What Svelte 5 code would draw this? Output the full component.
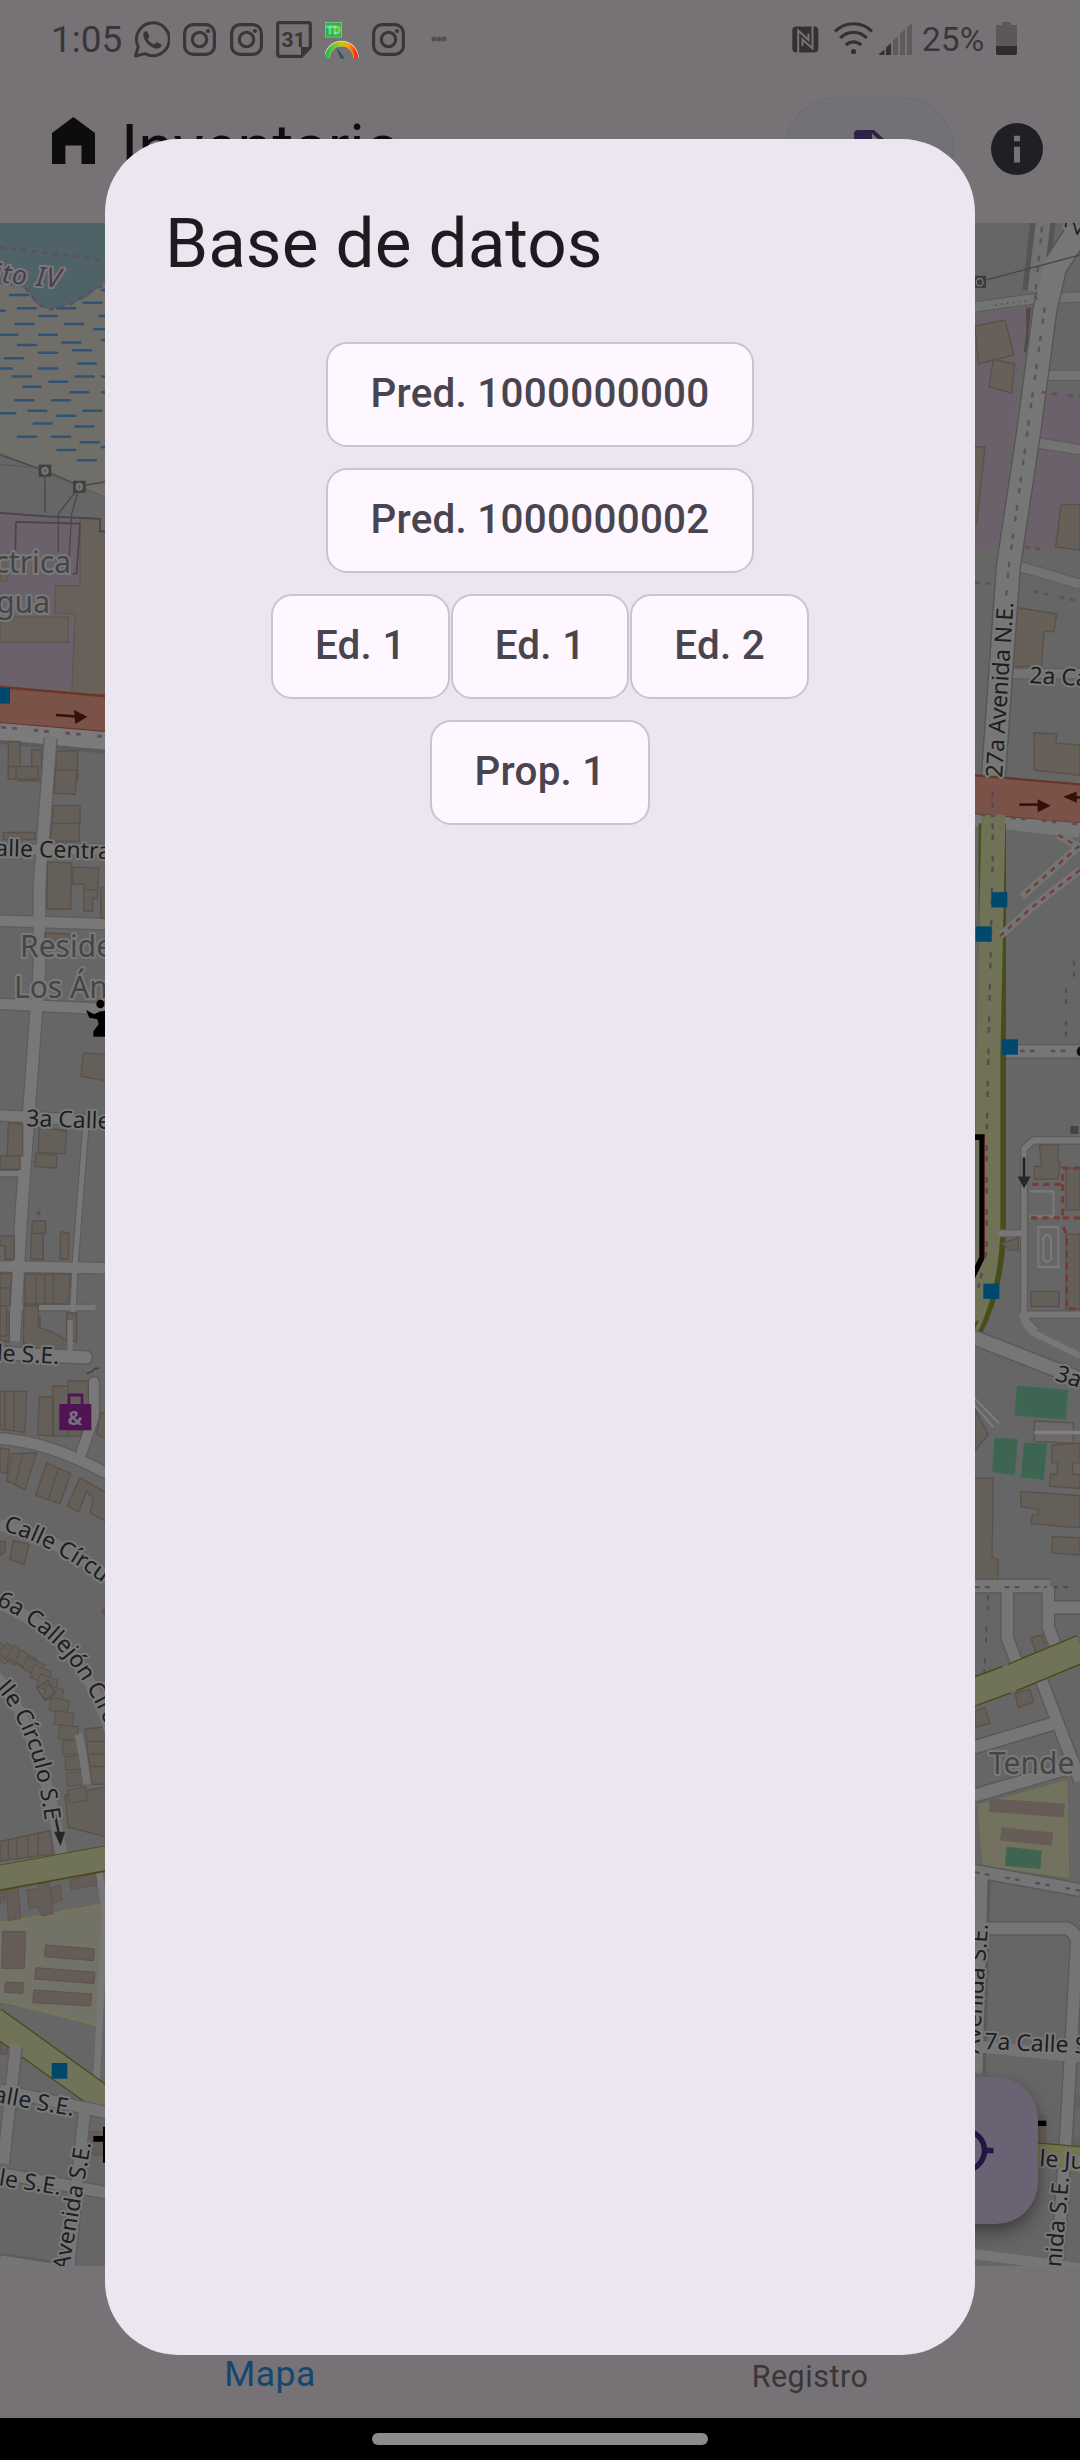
<script>
  const rows = [
    ['Pred. 1000000000'],
    ['Pred. 1000000002'],
    ['Ed. 1', 'Ed. 1', 'Ed. 2'],
    ['Prop. 1'],
  ];

  // wetland hatching: x, y in the north-west tile
  const marsh = [
    [30,210],[54,247],[-40,254],[117,269],[172,247],[250,232],[299,269],[46,291],[195,291],[282,306],[-2,321],[117,321],
    [187,343],[54,350],[219,365],[306,336],[117,372],[14,387],[234,402],[-18,416],[117,416],[38,438],[227,438],[306,438],
    [148,453],[69,467],[211,482],[306,482],[46,505],[156,505],[85,534],[250,534],[-8,541],[172,548],[101,570],[227,578],
    [54,607],[156,607],[242,622],[306,636],[172,644],[234,673],[306,196],
  ];

  // curved row of houses beside the circular street
  const terrace = Array.from({ length: 15 }, (_, i) => {
    const t = i / 14;
    return { x: 5 + 225 * Math.sin(t * 1.5), y: 930 + 430 * (1 - Math.cos(t * 1.5)), a: 40 - t * 50 };
  });
  const bars = [[879, 48.5, 5.5], [886, 42, 5], [893, 35, 5], [900, 28.5, 5], [907, 22, 5]];
</script>

{#snippet insta()}
  <svg class="insta" viewBox="0 0 33 33">
    <rect x="1.6" y="1.6" width="29.8" height="29.8" rx="8.5" fill="none" stroke="#39363a" stroke-width="3.2" />
    <circle cx="16.5" cy="16.5" r="7.2" fill="none" stroke="#39363a" stroke-width="3.1" />
    <circle cx="25" cy="8" r="2.1" fill="#39363a" />
  </svg>
{/snippet}

<div class="screen">
  <div class="status">
    <div class="left">
      <span class="time">1:05</span>
      <svg class="wa" viewBox="0 0 36 38">
        <path d="M1.5 36 4.2 26.5A16.4 16.4 0 1 1 11 33.6Z" fill="none" stroke="#39363a" stroke-width="3" stroke-linejoin="round" />
        <path d="M9.3 14.5c.2-2.6 2-3.6 3.8-3.2l2.3 5.2-1.7 2.4c1.7 3 3.8 4.4 6.6 5.5l2.2-2.3 5 2.5c.2 3.2-3.2 4.6-6 4C15.500 27.200 9.200 20.300 9.300 14.500Z" fill="#39363a" />
      </svg>
      {@render insta()}
      {@render insta()}
      <svg class="cal" viewBox="0 0 36 37">
        <path d="M3.500 1.700H32.500Q34.300 1.700 34.300 3.500V26L25.500 35.300H3.500Q1.700 35.300 1.700 33.500V3.500Q1.700 1.700 3.500 1.700Z" fill="none" stroke="#39363a" stroke-width="3.200" />
        <path d="M25 36V26H35Z" fill="#39363a" />
        <text x="17.500" y="25.500" text-anchor="middle" font-size="21" font-weight="700" fill="#39363a">31</text>
      </svg>
      <svg class="td" viewBox="0 0 34 37">
        <defs>
          <linearGradient id="dial"><stop offset="0" stop-color="#24bd45" /><stop offset=".5" stop-color="#c5c914" /><stop offset=".75" stop-color="#ff9a00" /><stop offset="1" stop-color="#ff2a12" /></linearGradient>
        </defs>
        <rect x=".5" y=".5" width="16" height="14.500" fill="#22b83c" stroke="#78bd83" />
        <text x="8.500" y="12" text-anchor="middle" font-size="11" font-weight="700" fill="#22b83c" stroke="#cfe5d0" stroke-width=".6">TD</text>
        <path d="M2 36A14.500 14.500 0 0 1 31 36" fill="none" stroke="#d8d8c8" stroke-width="5.500" />
        <path d="M2 36.500A14.500 14.500 0 0 1 31 36.500" fill="none" stroke="url(#dial)" stroke-width="4.500" />
        <path d="M11 25 20 36.500H15.500Z" fill="#1c5b55" />
      </svg>
      {@render insta()}
      <svg class="more" viewBox="0 0 16 6"><circle cx="3" cy="3" r="2.500" /><circle cx="8" cy="3" r="2.500" /><circle cx="13" cy="3" r="2.500" /></svg>
    </div>
    <div class="right">
      <svg class="nfc" viewBox="0 0 27 27">
        <rect x=".3" y=".5" width="26" height="26" rx="4" fill="#343135" />
        <path d="M6.200 27V4.500L16.500 14V7.500" fill="none" stroke="#777276" stroke-width="2" />
        <path d="M20.500 0V22.500L10.500 13.500V20" fill="none" stroke="#777276" stroke-width="2" />
      </svg>
      <svg class="wifi" viewBox="0 0 39 34">
        <g fill="none" stroke="#343135" stroke-width="3.200">
          <path d="M1 10.500A26 26 0 0 1 38 10.500M6.200 17A18.500 18.500 0 0 1 32.800 17M11.800 24A11 11 0 0 1 27.200 24" />
        </g>
        <circle cx="19.500" cy="30.500" r="2.600" fill="#343135" />
      </svg>
      <svg class="signal" viewBox="879 21 34 33">
        {#each bars as [x, y, w], i}
          <path d={`M${x} ${y + 4.500}L${x + w} ${y}V54H${x}Z`} fill={i < 2 ? '#343135' : '#5d595d'} />
        {/each}
      </svg>
      <span class="pct">25%</span>
      <svg class="bat" viewBox="0 0 21 33">
        <path d="M6 0H15V3H21V31Q21 33 19 33H2Q0 33 0 31V3H6Z" fill="#5b585c" />
        <path d="M0 24H21V31Q21 33 19 33H2Q0 33 0 31Z" fill="#302d31" />
      </svg>
    </div>
  </div>

  <div class="appbar">
    <svg class="home" viewBox="0 0 43 47"><path d="M0 16 21.400 0 43 16V47H29.500V28.500H13.400V47H0Z" fill="#0d0c0e" /></svg>
    <span class="apptitle">Inventario</span>
    <div class="pill">
      <svg viewBox="0 0 42 52"><path d="M4 0H20L32 11V48H4Q0 48 0 44V4Q0 0 4 0Z" fill="#2c2347" /><path d="M18 3.500V12.500H28Z" fill="#727176" /></svg>
    </div>
    <svg class="info" viewBox="0 0 52 52"><circle cx="26" cy="26" r="26" fill="#202024" /><path d="M23 12.700H29V18.300H23ZM23 23.700H29V39.500H23Z" fill="#777276" /></svg>
  </div>

  <div class="mapbox">
    <svg class="map" viewBox="0 223 1080 2043">
      <defs>
        <path id="c1" d="M3 1531Q50 1543 112 1590" />
        <path id="c2" d="M-4 1605Q22 1616 50 1641Q80 1667 108 1730" />
        <path id="c3" d="M-4 1689Q34 1730 45 1822" />
      </defs>
      <rect x="0" y="223" width="1080" height="2043" fill="#666" />

      <!-- west: wetland, plant and avenue -->
      <g transform="translate(0 220) scale(.33333 .35714)">
        <path d="M0 0H330V790L240 745 0 650Z" fill="#706e69" />
        <path d="M0 0H330V165Q290 190 262 215Q200 245 150 249Q105 245 88 205L75 190 0 180Z" fill="#4f6268" />
        <path d="M0 78 90 86 165 95 235 102 330 115M75 190 118 238 150 250 208 238 270 200 330 175" fill="none" stroke="#5d4f5b" stroke-width="7" stroke-dasharray="15 17" />
        {#each marsh as [x, y]}
          <path d={`M${x} ${y}H${x + 54}`} stroke="#2e5375" stroke-width="7" stroke-linecap="round" />
        {/each}
        <path d="M0 820 240 838V870H320V1330L0 1308Z" fill="#6a616a" />
        <path d="M240 836H300V872H330V1330H215L225 1104 165 1100V1024H240ZM0 1112H205V1182H0ZM0 940H40L20 1010H0Z" fill="#676159" stroke="#5c554d" stroke-width="3" />
        <path d="M0 820 140 830 300 837V872H330M48 845 240 850 230 990H218M48 845 45 960" fill="none" stroke="#4b424a" stroke-width="5" />
        <path d="M0 657 135 702 240 745 330 731M135 702V820M238 747 175 823V930M238 747 215 823 207 950" fill="none" stroke="#494949" stroke-width="4" />
        <path d="M0 685 100 692 330 782" fill="none" stroke="#595959" stroke-width="3" />
        {#each [[135, 702], [238, 747]] as [x, y]}
          <rect x={x - 19} y={y - 17} width="38" height="34" fill="#414141" />
          <circle cx={x} cy={y} r="11" fill="#777" />
          <path d={`M${x - 6} ${y}h12M${x} ${y - 6}v12`} stroke="#555" stroke-width="3" />
        {/each}
        <path d="M0 1435 330 1463" stroke="#5b5b5b" stroke-width="64" />
        <path d="M0 1430 330 1458" stroke="#7b7b7b" stroke-width="52" />
        <path d="M-5 1356 335 1383" stroke="#6b3528" stroke-width="104" />
        <path d="M-5 1358 335 1385" stroke="#7a5247" stroke-width="94" />
        <path d="M5 1420 330 1448" stroke="#5d4f5b" stroke-width="8" stroke-dasharray="14 18 14 50" />
        <path d="M168 1386 230 1390" stroke="#331009" stroke-width="7" />
        <path d="M222 1372 262 1391 226 1411Z" fill="#331009" />
        <rect x="-20" y="1310" width="50" height="44" fill="#00486c" />
        <path d="M25 1460H60V1560H25ZM95 1483H125V1570H55V1540H95ZM168 1487H233V1570H168Z" fill="#655f5a" stroke="#5a514a" stroke-width="4" />
      </g>

      <!-- west: street grid -->
      <g transform="translate(0 770) scale(.33333 .35714)">
        <g fill="none" stroke="#5c5c5c">
          <path d="M152 -90 145 0 118 330V560L65 1230 42 1600" stroke-width="42" />
          <path d="M0 223H330M0 422 330 432M0 655 330 670M0 967 330 985M0 1390 330 1395" stroke-width="36" />
          <path d="M258 990 225 1390 215 1600M0 1130H75M65 1505H280" stroke-width="22" />
        </g>
        <g fill="none" stroke="#787878">
          <path d="M152 -90 145 0 118 330V560L65 1230 42 1600" stroke-width="35" />
          <path d="M0 223H330M0 422 330 432M0 655 330 670M0 967 330 985M0 1390 330 1395" stroke-width="29" />
          <path d="M258 990 225 1390 215 1600M0 1130H75M65 1505H280" stroke-width="15" stroke-linecap="round" />
        </g>
        <path
          d="M25 -10H115V25H25ZM48 -10V20M165 0H230L225 68 163 65ZM160 100H240V150H157ZM157 150H238V200H150ZM10 175H105V195H10ZM142 258 215 260 212 390H142ZM220 272 296 275 292 360H278V395H252V320H218ZM255 335H290M302 330H330V415H302ZM135 455 210 460V480H135ZM250 792 330 797V872L243 858ZM25 990H68V1080H22ZM0 1080H60V1118H0ZM118 1000 200 1010 195 1075 115 1070ZM108 1073 172 1080 168 1115 105 1110ZM97 1263H137V1298H95ZM94 1298H130V1370H92ZM182 1293 207 1297 205 1370H180ZM0 1305H43V1370H15V1332H0ZM0 1410H36L30 1500H0ZM0 1450H33M75 1412H210L205 1495H75ZM108 1412V1495M135 1412V1495M160 1412V1495M75 1520 120 1530V1600H70ZM200 1520H230V1600H200ZM0 1500 28 1520V1600H0Z"
          fill="#655f5a" stroke="#5a514a" stroke-width="4" />
        <circle cx="116" cy="1241" r="6" fill="#456039" />
        <circle cx="301" cy="655" r="12" fill="#000" />
        <path d="M258 672 282 684 300 676 330 672V747H280V732L296 712 292 698 268 694Z" fill="#000" />
      </g>

      <!-- west: circular streets -->
      <g transform="translate(0 1320) scale(.33333 .35714)">
        <path d="M0 -40H20V45H0ZM72 -40H115V20L160 35 205 60V90H150L70 65Z" fill="#655f5a" stroke="#5a514a" stroke-width="4" />
        <path d="M0 92 260 105" stroke="#5c5c5c" stroke-width="42" stroke-linecap="round" />
        <path d="M0 92 258 105" stroke="#787878" stroke-width="34" stroke-linecap="round" />
        <path d="M210 0V90" stroke="#777" stroke-width="16" />
        <g fill="none"><path d="M0 332Q150 340 330 435M282 175V270L245 370" stroke="#5c5c5c" stroke-width="38" stroke-linecap="round" /><path d="M0 332Q150 340 330 435M282 175V270L245 370" stroke="#787878" stroke-width="30" stroke-linecap="round" /></g>
        <path
          d="M0 200H80L75 315 0 305ZM14 200V305M42 200V312M118 215H160V325L113 322ZM158 185H205V325H158ZM205 170H265V230L240 325H205ZM300 260H330V335L290 320ZM0 358 28 362 20 430 0 425ZM35 375 110 372 75 475 20 450ZM68 375 45 465M140 400 212 430 180 515 107 490ZM175 415 145 503M240 442 330 490V570L270 540 280 500 260 480 235 538 202 520ZM0 620H15V650L0 660ZM40 618 88 628 72 685 30 670ZM305 815 330 800V840ZM255 1145 330 1138V1300H275ZM262 1180H330M268 1215H330M270 1250H330M195 1330 330 1305V1450L205 1420ZM0 1460 150 1430 158 1495 0 1515ZM25 1457V1510M50 1450V1505M85 1445V1500M115 1440V1497"
          fill="#655f5a" stroke="#5a514a" stroke-width="4" />
        {#each terrace as h}
          <rect x="-25" y="-18" width="55" height="38" transform={`translate(${h.x} ${h.y}) rotate(${h.a})`} fill="#655f5a" stroke="#5a514a" stroke-width="3" />
        {/each}
        <g fill="none" stroke="#747474" stroke-width="34">
          <path d="M0 575Q150 600 330 725M0 795Q240 880 330 1150M-10 1000Q115 1130 185 1495" />
        </g>
        <path d="M235 1160Q250 1220 262 1300" stroke="#747474" stroke-width="24" />
        <path d="M145 1010 165 1045 135 1065 110 1030Z" fill="none" stroke="#505050" stroke-width="4" />
        <path d="M260 150 275 145 283 137 298 135" fill="none" stroke="#454545" stroke-width="5" />
        <path d="M178 235H274V309H178Z" fill="#511354" /><path d="M207 238V210H246V238" fill="none" stroke="#511354" stroke-width="8" />
        <path d="M165 1385 178 1445" stroke="#262626" stroke-width="7" /><path d="M162 1433H195L182 1473Z" fill="#262626" />
      </g>

      <!-- south-west: school and diagonal avenue -->
      <g transform="translate(0 1860) scale(.33333)">
        <path d="M0 190 300 132 330 180 303 502 0 425Z" fill="#737266" />
        <path d="M0 188 300 134M0 425 120 445 303 502" fill="none" stroke="#807a45" stroke-width="4" stroke-dasharray="24 7" />
        <path d="M8 215H77L73 325H5ZM137 255 283 267 280 302 133 290ZM107 323 285 337 282 371 104 357ZM102 390 275 402 272 438 98 428ZM16 367 70 368 68 400 14 397ZM20 90 55 85 62 175 25 182ZM80 90 115 85 112 70 148 68 160 160 125 168 115 140 88 145ZM150 85 180 75 187 120 160 130ZM210 60 290 40V75L215 90ZM0 90H15V125L0 130ZM0 545 22 560V582H0ZM270 815H310V885H278Z" fill="#655b57" stroke="#5b534d" stroke-width="3" />
        <path d="M298 40 315 150 290 660" fill="none" stroke="#777" stroke-width="20" />
        <path d="M-5 55 330 -7" stroke="#474b17" stroke-width="78" />
        <path d="M-5 53 335 -9" stroke="#717358" stroke-width="70" />
        <path d="M-20 480 335 735" stroke="#474b17" stroke-width="84" />
        <path d="M-20 480 335 735" stroke="#717358" stroke-width="76" />
        <path d="M48 560 10 910M255 740 205 1230M0 690 330 760M0 940 330 1000M0 1200 200 1230" fill="none" stroke="#5c5c5c" stroke-width="42" />
        <path d="M48 555 10 910M255 740 205 1230M0 690 330 760M0 940 330 1000M0 1203 200 1233" fill="none" stroke="#757575" stroke-width="34" />
        <rect x="155" y="609" width="47" height="47" fill="#00486c" />
        <path d="M280 828H330V845H280ZM309 800H330V908H309Z" fill="#000" />
      </g>

      <!-- north-east -->
      <g transform="translate(970 220) scale(.33333 .35714)">
        <path d="M0 275 170 245 90 920H0ZM228 480 330 495V925L165 915Z" fill="#6a616a" />
        <path d="M15 297 105 280 132 378 25 403ZM70 390 134 403 125 485 57 467ZM0 635H45L20 850H0ZM273 797H330V925L257 915ZM140 1085 260 1103 252 1152H222L214 1250H118ZM192 1435 260 1440 258 1465 330 1470V1555L193 1540Z" fill="#676058" stroke="#5a514a" stroke-width="4" />
        <path d="M180 245 165 370M172 245V350" stroke="#51484f" stroke-width="7" />
        <g fill="none">
          <path d="M0 245 180 222 330 215M215 435H330M205 625 330 643M150 970 330 1020M110 1270H330" stroke="#5c5c5c" stroke-width="32" />
          <path d="M0 245 180 222 330 215M215 435H330M205 625 330 643M150 970 330 1020M110 1270H330" stroke="#737373" stroke-width="26" />
          <path d="M220 0 195 200M325 30 255 130 225 250 175 600 115 970 70 1560" stroke="#555" stroke-width="76" />
          <path d="M220 0 195 200" stroke="#727272" stroke-width="44" />
          <path d="M325 30 255 130 225 250 175 600 115 970 70 1560" stroke="#767676" stroke-width="68" />
          <path d="M216 20 195 215 225 240 180 540 115 980 108 1060M215 482 330 495M165 915 240 925M15 1015 60 1018M190 1040 330 1068" stroke="#5e505c" stroke-width="7" stroke-dasharray="15 16 15 34" />
          <path d="M75 238 180 225" stroke="#505050" stroke-width="5" stroke-dasharray="4 14" />
          <path d="M0 180 330 98" stroke="#494949" stroke-width="4" />
        </g>
        <rect x="12" y="156" width="36" height="34" fill="#3c3c3c" /><circle cx="29" cy="174" r="10" fill="none" stroke="#777" stroke-width="4" />
      </g>

      <!-- east: boulevard -->
      <g transform="translate(970 770) scale(.33333 .35714)">
        <path d="M0 130 330 165" stroke="#777" stroke-width="50" />
        <path d="M-5 66 340 94" stroke="#6b3528" stroke-width="112" />
        <path d="M-5 68 340 96" stroke="#7a5247" stroke-width="103" />
        <path d="M100 788H330" stroke="#5c5c5c" stroke-width="42" /><path d="M90 788H330" stroke="#767676" stroke-width="34" />
        <path d="M67 150V1300Q60 1450 0 1560" fill="none" stroke="#484d1a" stroke-width="82" />
        <path d="M70 125V145L62 500 55 800V1300Q48 1450 -10 1560" fill="none" stroke="#707256" stroke-width="72" />
        <path d="M68 60V250L50 1020V1350L25 1450" fill="none" stroke="#57495a" stroke-width="7" stroke-dasharray="16 14 16 44" />
        <path d="M32 125 330 153M150 787H330M312 535V590L288 600V760" fill="none" stroke="#5a4c5a" stroke-width="7" stroke-dasharray="14 16 14 48" />
        <path d="M265 182 325 215 155 355M330 280 185 385 90 465" fill="none" stroke="#747474" stroke-width="22" />
        <path d="M265 182 325 215 155 355M330 280 185 385 90 465" fill="none" stroke="#743e35" stroke-width="7" stroke-dasharray="16 16" />
        <path d="M148 97H215" stroke="#331009" stroke-width="7" /><path d="M203 82 242 100 203 118ZM280 75 320 60V92Z" fill="#331009" />
        <path d="M305 77H330" stroke="#331009" stroke-width="7" />
        {#each [[64, 342], [17, 438], [96, 754], [40, 1438]] as [x, y]}
          <rect {x} {y} width="48" height="43" fill="#00486c" />
        {/each}
        <path d="M10 1028H36V1365L0 1435" fill="none" stroke="#000" stroke-width="16" />
        <path d="M43 1030V1370" stroke="#6b241c" stroke-width="3" />
        <g fill="none"><path d="M330 1037H190L162 1060V1535L200 1570M90 1297H165M170 1525H330" stroke="#5b5b5b" stroke-width="24" /><path d="M330 1037H190L162 1060V1535L200 1570M85 1297H165M170 1525H330" stroke="#777" stroke-width="17" /></g>
        <path d="M208 1050H267L262 1090 270 1100 265 1145H193V1110H215ZM288 1115H330V1232H288ZM288 1300H330V1510H288ZM183 1460H268V1502H183ZM95 1325 145 1310V1345H120Z" fill="#655f5a" stroke="#5a514a" stroke-width="4" />
        <path d="M205 1280H265V1392H205ZM178 1180H250V1250H178M220 1370V1310Q235 1290 243 1315V1370Q232 1385 220 1370" fill="none" stroke="#7a7a7a" stroke-width="6" />
        <path d="M330 1115H278V1160H175M278 1160V1254H180M278 1254H330M280 1280 290 1300V1508H330" fill="none" stroke="#793c33" stroke-width="9" stroke-dasharray="19 15" />
        <path d="M162 1085V1145" stroke="#282828" stroke-width="9" /><path d="M143 1138H182L162 1172Z" fill="#282828" />
        <rect x="301" y="997" width="24" height="22" fill="#444" /><circle cx="334" cy="788" r="14" fill="#111" />
      </g>

      <!-- east: courts and market -->
      <g transform="translate(970 1320) scale(.33333 .35714)">
        <path d="M15 5 28 0 15 25Z" fill="#4b5018" />
        <g fill="none"><path d="M0 45 330 165" stroke="#595959" stroke-width="46" /><path d="M0 45 330 165" stroke="#767676" stroke-width="38" /><path d="M155 -20Q165 30 210 45L330 100" stroke="#777" stroke-width="18" /></g>
        <path d="M15 220 88 290M15 240 70 300" stroke="#808080" stroke-width="5" />
        <path d="M15 250 55 320 15 365ZM0 443H70L66 665 85 670 83 728H0ZM247 350 330 345V400H308V432H330V472L238 465 242 432H262V400H245ZM152 480 330 492V582L183 570 187 545H205V530L152 522ZM247 606 330 610V658L246 652ZM182 890 215 882 232 925 200 935ZM135 1045 180 1035 190 1070 145 1085ZM15 1095 45 1085 60 1130 15 1140Z" fill="#655f5a" stroke="#5a514a" stroke-width="4" />
        <path d="M193 283 310 288V345L193 340ZM193 315H330" fill="#6d6a69" stroke="#59514d" stroke-width="4" /><path d="M193 315H330" stroke="#808080" stroke-width="10" />
        <path d="M142 185 293 197 286 278 135 266ZM75 331 142 334 133 433 68 424ZM163 345 230 348 220 446 155 438Z" fill="#3d6552" stroke="#386b55" stroke-width="3" />
        <g fill="none">
          <path d="M0 745H240M235 745V860L260 920M112 760V890L140 960M235 805H330M215 1010 330 1290M0 1200 250 1130M0 1335 330 1245" stroke="#595959" stroke-width="42" />
          <path d="M0 745H240M235 745V860L260 920M112 745V890L140 960M235 805H330M215 1010 330 1290M0 1200 250 1130M0 1335 330 1245" stroke="#767676" stroke-width="34" />
        </g>
        <path d="M15 748H230M250 748H320M55 770 42 1000" fill="none" stroke="#59495a" stroke-width="6" stroke-dasharray="14 16 14 45" />
        <path d="M0 1045 130 1000 335 920" fill="none" stroke="#474b17" stroke-width="82" stroke-dasharray="116 18 300" />
        <path d="M0 1045 130 1000 335 920" fill="none" stroke="#717358" stroke-width="74" />
        <path d="M20 1355 295 1285 300 1565 35 1530Z" fill="#73725f" stroke="#66645a" stroke-width="4" />
        <path d="M60 1340 285 1354 281 1393 57 1377ZM95 1420 250 1435 245 1472 90 1457Z" fill="#655b57" />
        <path d="M110 1475 215 1486 211 1537 105 1528Z" fill="#3d6552" />
      </g>

      <!-- south-east -->
      <g transform="translate(970 1860) scale(.33333)">
        <g fill="none">
          <path d="M0 30 330 90M45 205H290Q325 220 320 260L290 800 260 1230M40 60 25 640" stroke="#5a5a5a" stroke-width="44" />
          <path d="M0 30 330 90M45 205H290Q325 220 320 260L290 800 260 1230M35 40 20 640M30 560 330 590" stroke="#757575" stroke-width="35" />
          <path d="M0 1180 330 1225" stroke="#777" stroke-width="30" />
          <path d="M15 37 330 92" stroke="#5b4c59" stroke-width="7" stroke-dasharray="14 16 14 48" />
        </g>
        <path d="M205 765H230V845H205ZM315 705H330V745H315ZM308 832H330V860H308Z" fill="#655f5a" />
        <path d="M195 850 330 862V938L195 912Z" fill="#72744f" /><path d="M195 848 330 860" stroke="#4a4e1c" stroke-width="4" />
        <rect x="190" y="782" width="39" height="16" fill="#000" />
      </g>

      <g class="label area">
        <text transform="translate(61 288) rotate(5)" text-anchor="end" font-size="27" class="boundary">ito IV</text>
        <text x="71" y="573" text-anchor="end">ctrica</text>
        <text x="50" y="613" text-anchor="end">gua</text>
        <text x="20" y="957">Reside</text>
        <text x="14" y="998">Los Án</text>
        <text x="989" y="1774">Tende</text>
      </g>
      <g class="label street">
        <text transform="translate(-5 856) rotate(1.500)">alle Centra</text>
        <text transform="translate(26 1126) rotate(2)">3a Calle</text>
        <text transform="translate(59 1364) rotate(3)" text-anchor="end">le S.E.</text>
        <text><textPath href="#c1">Calle Círcu</textPath></text>
        <text><textPath href="#c2">6a Callejón Círc</textPath></text>
        <text><textPath href="#c3">lle Círculo S.E.</textPath></text>
        <text transform="translate(73 2116) rotate(10)" text-anchor="end">alle S.E.</text>
        <text transform="translate(60 2195) rotate(9)" text-anchor="end">le S.E.</text>
        <text transform="translate(91 2143) rotate(-80)" text-anchor="end">Avenida S.E.</text>
        <text transform="translate(1077 236) rotate(-60)">2</text>
        <text transform="translate(1002 778) rotate(-86.300)" textLength="176">27a Avenida N.E.</text>
        <text transform="translate(1029 683) rotate(3)">2a Ca</text>
        <text transform="translate(1054 1380) rotate(18)">3a</text>
        <text transform="translate(988 1924) rotate(-86)" text-anchor="end">Avenida S.E.</text>
        <text transform="translate(984 2049) rotate(2.500)">7a Calle S</text>
        <text transform="translate(1039 2166) rotate(4)">le Ju</text>
        <text transform="translate(1069 2177) rotate(-85)" text-anchor="end">nida S.E.</text>
      </g>
      <text x="75" y="1425" text-anchor="middle" font-size="20" font-weight="700" fill="#77707a" font-family="Noto Sans, sans-serif">&amp;</text>
    </svg>
    <div class="fab">
      <svg viewBox="0 0 63 63"><circle cx="31.500" cy="31.500" r="20" fill="none" stroke="#221744" stroke-width="5.500" /><path d="M31.500 3V11M31.500 52V60M3 31.500H11M52 31.500H60.500" stroke="#221744" stroke-width="5.500" /></svg>
    </div>
  </div>

  <div class="tabs">
    <span class="tab on">Mapa</span>
    <span class="tab">Registro</span>
  </div>
  <div class="gesture"><i></i></div>

  <div class="dialog">
    <h1>Base de datos</h1>
    <div class="rows">
      {#each rows as row}
        <div class="row">
          {#each row as label}<button>{label}</button>{/each}
        </div>
      {/each}
    </div>
  </div>
</div>

<style>
  :global(body) { margin: 0; background: #777276; }
  .screen { position: relative; width: 1080px; height: 2460px; overflow: hidden; display: flex; flex-direction: column; background: #777276; font-family: Roboto, sans-serif; }
  svg { display: block; flex: none; }
  .status { height: 78px; box-sizing: border-box; padding: 0 63px 0 51px; display: flex; justify-content: space-between; align-items: center; color: #39363a; }
  .left, .right { display: flex; align-items: center; }
  .left { gap: 13.500px; }
  .time { font-size: 37px; width: 69px; white-space: nowrap; }
  .wa { width: 36px; height: 38px; }
  .insta { width: 33px; height: 33px; }
  .cal { width: 36px; height: 37px; }
  .td { width: 34px; height: 37px; margin-top: 2px; margin-left: -1px; }
  .more { width: 16px; height: 6px; margin-left: 12px; fill: #514d51; }
  .nfc { width: 27px; height: 27px; margin-right: 15px; }
  .wifi { width: 39px; height: 34px; margin-top: -2px; margin-right: 6px; }
  .signal { width: 34px; height: 33px; margin-top: -2px; margin-right: 9px; }
  .pct { font-size: 33.500px; width: 62px; margin-right: 12px; }
  .bat { width: 21px; height: 33px; margin-top: -2px; }

  .appbar { height: 145px; box-sizing: border-box; padding: 0 37px 0 52px; display: flex; align-items: flex-start; }
  .home { width: 43px; height: 47px; margin-top: 39px; }
  .apptitle { margin-left: 26px; margin-top: 33px; font-size: 63.500px; line-height: 74px; color: #0d0c0e; }
  .pill { box-sizing: border-box; width: 169px; height: 105px; margin: 19px 37px 0 auto; border-radius: 52px; background: #727176; border: 1px solid #6d6b6f; padding: 32px 0 0 68px; }
  .pill svg { width: 42px; height: 52px; }
  .info { width: 52px; height: 52px; margin-top: 45px; }

  .mapbox { position: relative; height: 2043px; overflow: hidden; }
  .map { width: 1080px; height: 2043px; }
  .label { font-family: 'Noto Sans', sans-serif; paint-order: stroke; stroke: #797979; stroke-width: 4px; stroke-linejoin: round; }
  .area { font-size: 30px; fill: #454545; }
  .boundary { font-style: italic; fill: #4d3c4d; letter-spacing: 1px; }
  .street { font-size: 23px; fill: #1e1e1e; }
  .fab { position: absolute; left: 891px; top: 1854px; width: 147px; height: 147px; border-radius: 42px; background: #6a6374; box-shadow: 0 10px 20px rgba(0, 0, 0, .3), 0 4px 10px rgba(0, 0, 0, .15); display: flex; align-items: center; justify-content: center; }
  .fab svg { width: 63px; height: 63px; }

  .tabs { height: 152px; display: flex; background: #777276; }
  .tab { flex: 1; text-align: center; font-size: 30.500px; line-height: 36px; padding-top: 93px; color: #39363a; letter-spacing: .5px; }
  .tab.on { font-size: 35.500px; line-height: 42px; padding-top: 87px; color: #124770; }
  .gesture { height: 42px; background: #000; display: flex; align-items: center; justify-content: center; }
  .gesture i { width: 336px; height: 12px; border-radius: 6px; background: #8c8c8c; }

  .dialog { position: absolute; left: 105px; top: 139px; width: 870px; height: 2216px; box-sizing: border-box; padding: 63px 60px; border-radius: 73.500px; background: #ece6f0; }
  h1 { margin: 0; font-size: 69.300px; font-weight: 400; line-height: 84px; color: #1d1b20; white-space: nowrap; }
  .rows { margin-top: 56px; display: flex; flex-direction: column; gap: 21px; }
  .row { display: flex; justify-content: center; gap: 1px; }
  button { box-sizing: border-box; height: 105px; padding: 0 42px; border: 2.600px solid #cac4d0; border-radius: 21px; background: #fef7ff; color: #49454f; font: 500 40.400px/1 Roboto, sans-serif; letter-spacing: .26px; white-space: nowrap; }
</style>
